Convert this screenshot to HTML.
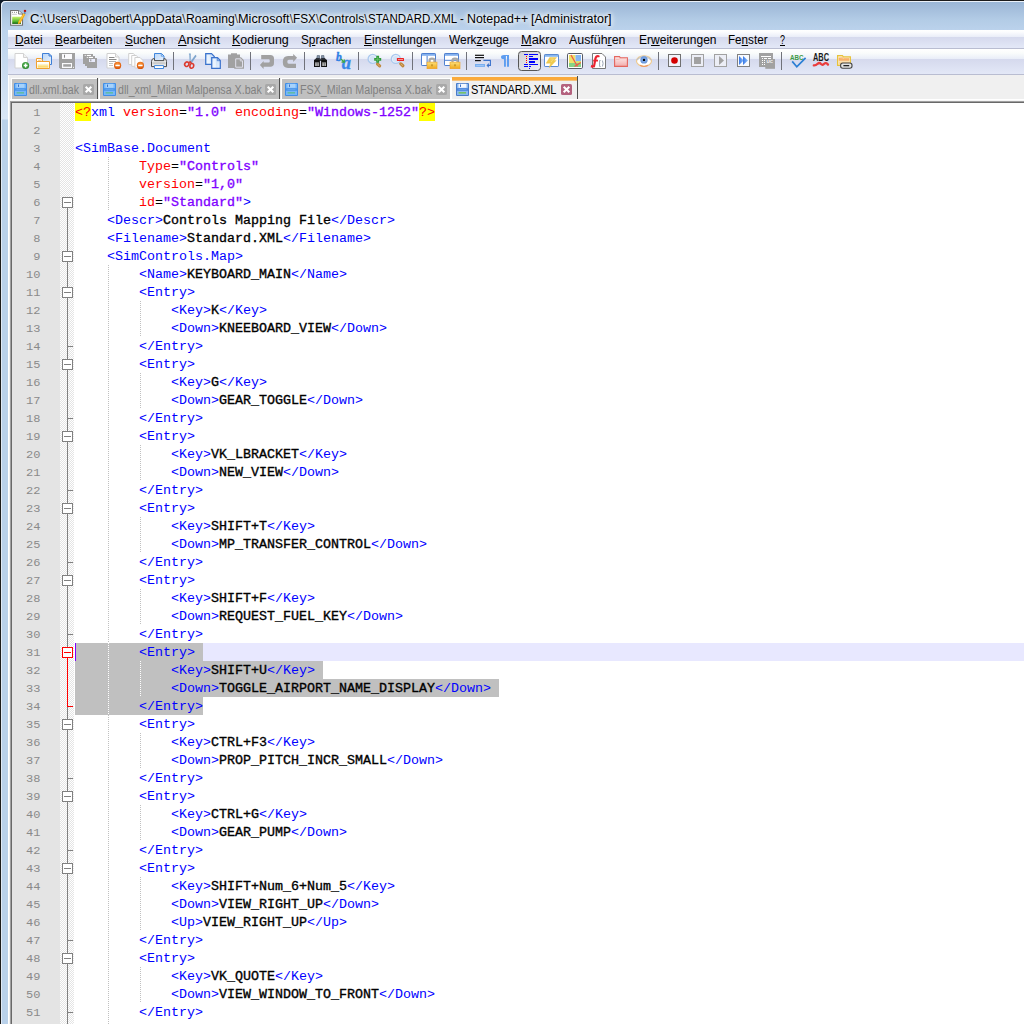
<!DOCTYPE html>
<html><head><meta charset="utf-8"><title>Notepad++</title>
<style>
html,body{margin:0;padding:0;}
body{width:1024px;height:1024px;overflow:hidden;position:relative;background:#f0f0f0;font-family:'Liberation Sans', sans-serif;}
.a{position:absolute;}
.t{position:absolute;white-space:pre;line-height:1;}
#title{left:0;top:0;width:1024px;height:30px;background:linear-gradient(#98b5d5 0px,#a3bddb 8px,#b3cce6 20px,#bbd2ec 30px);}
#menubar{left:8px;top:30px;width:1016px;height:18px;background:linear-gradient(#ffffff 0px,#fbfcfe 2px,#e9edf8 7px,#d5d9ed 7px,#e3e8f7 18px);border-bottom:1px solid #b9bdd1;}
#toolbar{left:8px;top:49px;width:1016px;height:25px;background:linear-gradient(#ffffff 0px,#fafcfb 4px,#e9edf8 10px,#d5d9ed 10px,#e3e8f7 25px);border-bottom:1px solid #b9bdd1;}
.mi{font-size:12px;color:#000;top:33.5px;transform-origin:0 0;}
.mi u{text-decoration:underline;text-decoration-thickness:1px;text-underline-offset:1px;}
.sep{position:absolute;top:52px;width:1px;height:18px;background:#70727a;}
.ic{position:absolute;top:53px;width:16px;height:16px;overflow:visible;}
.tab{position:absolute;top:79px;height:20px;background:#c0c0c0;}
.tabt{font-size:12px;top:83.6px;color:#808080;transform-origin:0 0;}
.ln{position:absolute;left:12px;width:28.4px;text-align:right;font:12px/18px 'Liberation Mono', monospace;color:#8a8a8a;height:18px;margin-top:1px;transform-origin:0 12px;transform:scaleY(0.9);}
.cl{position:absolute;left:75px;height:18px;white-space:pre;tab-size:4;-moz-tab-size:4;font:13.333px/18px 'Liberation Mono', monospace;color:#000;-webkit-text-stroke:0.35px #000;margin-top:1px;transform-origin:0 12px;transform:scaleY(0.9);}
.cl b{font-weight:bold;}
.g{color:#0000ff;-webkit-text-stroke:0;}
.r{color:#ff0000;-webkit-text-stroke:0;}
.p{color:#8000ff;-webkit-text-stroke:0.35px #8000ff;}
.e{color:#000;-webkit-text-stroke:0;}
.q{color:#ff0000;-webkit-text-stroke:0;}
.ig{position:absolute;width:1px;background:repeating-linear-gradient(#c0c0c0 0 1px,transparent 1px 2px);}
.fb{position:absolute;left:62px;width:9px;height:9px;border:1px solid #808080;background:#fff;}
.fb i{position:absolute;left:1px;top:4px;width:7px;height:1px;background:#808080;}
.ft{position:absolute;left:68px;width:5px;height:1px;background:#808080;}
</style></head><body>

<div id="title" class="a"></div>
<div class="a" style="left:0;top:30px;width:8px;height:994px;background:linear-gradient(#bcd3ec 0px,#d9e6f5 89px,#b9d1ea 90px,#b9d1ea 994px);"></div>
<div class="a" style="left:0;top:0;width:1024px;height:1px;background:#1c1c1c;"></div>
<div class="a" style="left:0;top:0;width:1px;height:1024px;background:#1c1c1c;"></div>
<div class="a" style="left:1px;top:1px;width:1023px;height:1px;background:#eaf1f9;"></div>
<div class="a" style="left:1px;top:1px;width:1px;height:1023px;background:#dfe9f5;"></div>
<svg class="a" style="left:0;top:0;width:7px;height:7px" viewBox="0 0 7 7"><path d="M0 0H7V1H5.5Q1 1 1 5.5V7H0Z" fill="#0e1a28"/><path d="M1.5 7V5.5Q1.5 1.5 5.5 1.5H7" fill="none" stroke="#f2f7fc" stroke-width="1"/></svg>
<svg class="a" style="left:10px;top:9px;width:17px;height:17px" viewBox="0 0 17 17"><defs><linearGradient id="gNp" x1="0" y1="0" x2="0" y2="1"><stop offset="0" stop-color="#c8f26a"/><stop offset="0.7" stop-color="#4fb02c"/><stop offset="1" stop-color="#0d5a0d"/></linearGradient></defs><path d="M0.6 1.5H8.5L12.5 5V16.3H0.6Z" fill="#fff" stroke="#707070" stroke-width="1.1"/><path d="M8.5 1.5V5H12.5" fill="#f4f4f4" stroke="#707070" stroke-width="0.9"/><path d="M2 3.3H3M4 3.3H5M6 3.3H7" stroke="#888" stroke-width="1"/><path d="M2 5.3H7" stroke="#bbb" stroke-width="0.8"/><rect x="2.2" y="7.7" width="8.8" height="7.2" fill="url(#gNp)"/><path d="M13.2 4.2L8.2 12.9L8 15.3L10.3 14.2L15.4 5.5Z" fill="#f6ae12"/><path d="M13.9 5L9.2 13.3" stroke="#fbd060" stroke-width="0.7"/><path d="M14.2 3.6L15.4 4.4" stroke="#4a6a9a" stroke-width="1.3"/><rect x="13.9" y="0.9" width="2.2" height="2" fill="#b01010"/></svg>
<div class="t" style="left:30.3px;top:12.5px;font-size:12px;color:#000;transform-origin:0 0;transform:scaleX(1.0884);text-shadow:0 0 5px #fff,0 0 5px #fff,0 0 8px #fff;">C:\</div>
<div class="t" style="left:47px;top:12.5px;font-size:12px;color:#000;transform-origin:0 0;transform:scaleX(0.9460);text-shadow:0 0 5px #fff,0 0 5px #fff,0 0 8px #fff;">Users\</div>
<div class="t" style="left:79.8px;top:12.5px;font-size:12px;color:#000;transform-origin:0 0;transform:scaleX(1.0018);text-shadow:0 0 5px #fff,0 0 5px #fff,0 0 8px #fff;">Dagobert\</div>
<div class="t" style="left:132.6px;top:12.5px;font-size:12px;color:#000;transform-origin:0 0;transform:scaleX(1.0570);text-shadow:0 0 5px #fff,0 0 5px #fff,0 0 8px #fff;">AppData\</div>
<div class="t" style="left:185.5px;top:12.5px;font-size:12px;color:#000;transform-origin:0 0;transform:scaleX(1.0144);text-shadow:0 0 5px #fff,0 0 5px #fff,0 0 8px #fff;">Roaming\</div>
<div class="t" style="left:237.6px;top:12.5px;font-size:12px;color:#000;transform-origin:0 0;transform:scaleX(1.0612);text-shadow:0 0 5px #fff,0 0 5px #fff,0 0 8px #fff;">Microsoft\</div>
<div class="t" style="left:292.8px;top:12.5px;font-size:12px;color:#000;transform-origin:0 0;transform:scaleX(0.9823);text-shadow:0 0 5px #fff,0 0 5px #fff,0 0 8px #fff;">FSX\</div>
<div class="t" style="left:319px;top:12.5px;font-size:12px;color:#000;transform-origin:0 0;transform:scaleX(1.0118);text-shadow:0 0 5px #fff,0 0 5px #fff,0 0 8px #fff;">Controls\</div>
<div class="t" style="left:367.6px;top:12.5px;font-size:12px;color:#000;transform-origin:0 0;transform:scaleX(0.9570);text-shadow:0 0 5px #fff,0 0 5px #fff,0 0 8px #fff;">STANDARD.XML - </div>
<div class="t" style="left:466.5px;top:12.5px;font-size:12px;color:#000;transform-origin:0 0;transform:scaleX(1.0316);text-shadow:0 0 5px #fff,0 0 5px #fff,0 0 8px #fff;">Notepad++ </div>
<div class="t" style="left:531.2px;top:12.5px;font-size:12px;color:#000;transform-origin:0 0;transform:scaleX(1.0419);text-shadow:0 0 5px #fff,0 0 5px #fff,0 0 8px #fff;">[Administrator]</div>
<div id="menubar" class="a"></div>
<div class="t mi" style="left:14.70px;transform:scaleX(0.9905);"><u>D</u>atei</div>
<div class="t mi" style="left:55.20px;transform:scaleX(0.9863);"><u>B</u>earbeiten</div>
<div class="t mi" style="left:125.20px;transform:scaleX(0.9889);"><u>S</u>uchen</div>
<div class="t mi" style="left:178.45px;transform:scaleX(1.0671);"><u>A</u>nsicht</div>
<div class="t mi" style="left:232.20px;transform:scaleX(1.0371);"><u>K</u>odierung</div>
<div class="t mi" style="left:301.20px;transform:scaleX(0.9781);">S<u>p</u>rachen</div>
<div class="t mi" style="left:364.45px;transform:scaleX(0.9991);"><u>E</u>instellungen</div>
<div class="t mi" style="left:449.20px;transform:scaleX(0.9920);">Werk<u>z</u>euge</div>
<div class="t mi" style="left:521.20px;transform:scaleX(1.0647);"><u>M</u>akro</div>
<div class="t mi" style="left:569.20px;transform:scaleX(1.0328);">Ausfüh<u>r</u>en</div>
<div class="t mi" style="left:638.70px;transform:scaleX(1.0014);">Er<u>w</u>eiterungen</div>
<div class="t mi" style="left:728.45px;transform:scaleX(0.9708);">Fe<u>n</u>ster</div>
<div class="t mi" style="left:779.95px;transform:scaleX(0.7477);"><u>?</u></div>
<div id="toolbar" class="a"></div>
<svg class="a" style="width:0;height:0;left:0;top:0" viewBox="0 0 1 1"><defs>
<linearGradient id="gFold" x1="0" y1="0" x2="0" y2="1"><stop offset="0" stop-color="#fffbe8"/><stop offset="1" stop-color="#fbd24a"/></linearGradient>
<linearGradient id="gPage" x1="0" y1="0" x2="1" y2="1"><stop offset="0" stop-color="#b9d6f7"/><stop offset="1" stop-color="#e9f2fd"/></linearGradient>
<radialGradient id="gOr" cx="0.5" cy="0.35" r="0.7"><stop offset="0" stop-color="#ff9a3c"/><stop offset="1" stop-color="#d24a00"/></radialGradient>
<radialGradient id="gGn" cx="0.5" cy="0.4" r="0.7"><stop offset="0" stop-color="#5fc05f"/><stop offset="1" stop-color="#1f7a1f"/></radialGradient>
<linearGradient id="gPr" x1="0" y1="0" x2="0" y2="1"><stop offset="0" stop-color="#ffffff"/><stop offset="0.6" stop-color="#d8d8d8"/><stop offset="1" stop-color="#f4f4f4"/></linearGradient>
<linearGradient id="gLock" x1="0" y1="0" x2="0" y2="1"><stop offset="0" stop-color="#fbe07a"/><stop offset="1" stop-color="#f0a81c"/></linearGradient>
<linearGradient id="gRedF" x1="0" y1="0" x2="0" y2="1"><stop offset="0" stop-color="#fdeeee"/><stop offset="1" stop-color="#f2acac"/></linearGradient>
<linearGradient id="gBtn" x1="0" y1="0" x2="1" y2="1"><stop offset="0" stop-color="#d4d4d6"/><stop offset="1" stop-color="#eef0f8"/></linearGradient>
<linearGradient id="gTri" x1="0" y1="0" x2="1" y2="0"><stop offset="0" stop-color="#3a78e6"/><stop offset="1" stop-color="#8cc0fa"/></linearGradient>
</defs></svg>
<svg class="ic" style="left:14px;top:53px;width:16px;height:16px" viewBox="0 0 16 16"><path d="M1 0.5H9.5L13.5 4.5V15H1Z" fill="#fff" stroke="#d2d2d2"/><path d="M9.5 0.5V4.5H13.5" fill="#f1f1f1" stroke="#d2d2d2"/><circle cx="11.6" cy="12.5" r="3.6" fill="url(#gGn)"/><path d="M11.6 10.6V14.4M9.7 12.5H13.5" stroke="#fff" stroke-width="1.4"/></svg>
<svg class="ic" style="left:36px;top:53px;width:16px;height:16px" viewBox="0 0 16 16"><path d="M6.5 0.5H13L15.5 3V11.5H6.5Z" fill="url(#gPage)" stroke="#3f7fd6"/><path d="M13 0.5V3H15.5" fill="none" stroke="#3f7fd6"/><path d="M0.5 9V5.5H5.3L6.5 7V9Z" fill="#fff" stroke="#f0a030"/><path d="M0.5 8.5H13.5V15.5H0.5Z" fill="#fff" stroke="#f0a030"/><rect x="1.6" y="10.6" width="10.8" height="4" fill="url(#gFold)"/><path d="M2 7.3H4.6L5.6 8" stroke="#f6c070" fill="none" stroke-width="0.9"/></svg>
<svg class="ic" style="left:59px;top:53px;width:16px;height:16px" viewBox="0 0 16 16"><path d="M0 0H16V16H1.5L0 14.5Z" fill="#a1a1a1"/><rect x="3" y="1" width="10" height="5" fill="#fbfbfd"/><rect x="5" y="1.7" width="1" height="3" fill="#8a8a8a"/><rect x="3" y="10" width="10" height="5" fill="#fbfbfd"/><rect x="4.2" y="11.2" width="7.8" height="2.5" fill="#a1a1a1"/><rect x="14" y="13.8" width="1" height="1" fill="#fff"/></svg>
<svg class="ic" style="left:83px;top:53px;width:16px;height:16px" viewBox="0 0 16 16"><rect x="0" y="1" width="10" height="10" fill="#a1a1a1"/><rect x="2" y="3" width="10" height="10" fill="#a1a1a1"/><rect x="4" y="5" width="10" height="10" fill="#a1a1a1"/><rect x="3.8" y="1.9" width="4.2" height="1.1" fill="#fff"/><rect x="1.7" y="1.9" width="1" height="1.1" fill="#fff"/><rect x="5.8" y="3.9" width="4.2" height="1.1" fill="#fff"/><rect x="3.8" y="3.9" width="1" height="1.1" fill="#fff"/><rect x="6" y="6" width="6" height="3" fill="#e9ebfb"/><rect x="7.3" y="6.3" width="1" height="2" fill="#8a8a8a"/></svg>
<svg class="ic" style="left:106px;top:53px;width:16px;height:16px" viewBox="0 0 16 16"><path d="M1 0.5H9.5L13 4V15H1Z" fill="#fff" stroke="#cfcfcf"/><path d="M9.5 0.5V4H13" fill="#f1f1f1" stroke="#cfcfcf"/><path d="M3 4.5H8.5M3 6.5H10.5" stroke="#8a8a8a"/><path d="M3 8.5H10" stroke="#b0b0b0"/><path d="M3 10.5H7M3 12.5H7" stroke="#c4c4c4"/><circle cx="11.6" cy="12.4" r="3.6" fill="url(#gOr)"/><rect x="9.4" y="11.7" width="4.4" height="1.5" fill="#fff"/></svg>
<svg class="ic" style="left:128px;top:53px;width:16px;height:16px" viewBox="0 0 16 16"><path d="M0.7 0.5H5.2L7 2.3V11.5H0.7Z" fill="#fff" stroke="#cfcfcf"/><path d="M3.7 2.5H8.2L10 4.3V13.3H3.7Z" fill="#fff" stroke="#cfcfcf"/><path d="M6.9 4.5H12L15 7.5V15H6.9Z" fill="#fff" stroke="#cfcfcf"/><circle cx="12.4" cy="12.4" r="3.6" fill="url(#gOr)"/><rect x="10.2" y="11.7" width="4.4" height="1.5" fill="#fff"/></svg>
<svg class="ic" style="left:151px;top:53px;width:16px;height:16px" viewBox="0 0 16 16"><path d="M3.5 8V0.5H10.5L13 3V8" fill="url(#gPage)" stroke="#3f86dc"/><path d="M10.3 0.8V3.2H12.7" fill="none" stroke="#3f86dc" stroke-width="0.7"/><path d="M3.2 5.5H3.5V7.6H12.9V5.5H13Q15.5 5.5 15.5 8.5V13.6H0.5V8.5Q0.5 5.5 3.2 5.5Z" fill="url(#gPr)" stroke="#4c4c4c"/><rect x="2.2" y="9.3" width="11.6" height="1.6" fill="#c9c9c9"/><path d="M3.5 12.6H12.5V15.5H3.5Z" fill="#fff" stroke="#3f86dc"/></svg>
<svg class="ic" style="left:182px;top:53px;width:16px;height:16px" viewBox="0 0 16 16"><path d="M6.9 0.4L8.8 0.4L9.2 10L7.6 10Z" fill="#7da4cc"/><path d="M13.4 1.8L14.6 3L9.6 10.2L8 9.2Z" fill="#7da4cc"/><path d="M7.8 1.5L8.1 8" stroke="#dce8f4" stroke-width="0.6"/><ellipse cx="4.8" cy="11.2" rx="2" ry="2.3" transform="rotate(35 4.8 11.2)" fill="none" stroke="#dc3a2e" stroke-width="1.6"/><ellipse cx="9.8" cy="12.9" rx="1.9" ry="2.4" transform="rotate(10 9.8 12.9)" fill="none" stroke="#dc3a2e" stroke-width="1.6"/><path d="M6.3 9.6L8.3 8.8L9.4 10.4" fill="none" stroke="#dc3a2e" stroke-width="1.3"/></svg>
<svg class="ic" style="left:205px;top:53px;width:16px;height:16px" viewBox="0 0 16 16"><path d="M0.7 0.7H6.5L9.3 3.5V11.3H0.7Z" fill="url(#gPage)" stroke="#3a72cc" stroke-width="1.2"/><path d="M6.7 4.7H12.5L15.3 7.5V15.3H6.7Z" fill="url(#gPage)" stroke="#3a72cc" stroke-width="1.2"/><path d="M12.3 5V7.7H15" fill="none" stroke="#3a72cc" stroke-width="0.8"/><rect x="1.8" y="1.8" width="3" height="8.5" fill="#fff" opacity="0.6"/><rect x="7.8" y="5.8" width="3" height="8.5" fill="#fff" opacity="0.6"/></svg>
<svg class="ic" style="left:228px;top:53px;width:16px;height:16px" viewBox="0 0 16 16"><path d="M0 1.5H3V0.3H9V1.5H12V15H0Z" fill="#a1a1a1"/><path d="M6.2 4.3H13L16 7.3V15.7H6.2Z" fill="#a1a1a1"/><path d="M7.7 5.8H12.4L14.5 7.9V14.2H7.7Z" fill="#a1a1a1" stroke="#dfdfea" stroke-width="1"/><path d="M12.3 5.9V8H14.4" fill="none" stroke="#dfdfea" stroke-width="0.8"/></svg>
<svg class="ic" style="left:259px;top:53px;width:16px;height:16px" viewBox="0 0 16 16"><path d="M2.2 2H11.3Q15 2 15 5.6V10Q15 13.8 11.3 13.8H4.6V15.9L0.9 12L4.6 8V9.6H9.8Q10.7 9.6 10.7 8.8V7Q10.7 6.2 9.8 6.2H2.2Z" fill="#a1a1a1"/></svg>
<svg class="ic" style="left:282px;top:53px;width:16px;height:16px" viewBox="0 0 16 16"><path d="M14 10.8V14.9H6Q0.8 14.9 0.8 9Q0.8 2.9 6 2.9H11.2V1L15.1 4.8L11.2 8.9V6.8H6.8Q5.3 6.8 5.3 8.8Q5.3 10.8 6.8 10.8Z" fill="#a1a1a1"/></svg>
<svg class="ic" style="left:313px;top:53px;width:16px;height:16px" viewBox="0 0 16 16"><path d="M3.9 2.2H6.8V7H3.2Z" fill="#59677a"/><path d="M8.2 2.2H11.1L11.8 7H8.2Z" fill="#59677a"/><path d="M4.6 3H5.6V6.5H4.6ZM9.4 3H10.4V6.5H9.4Z" fill="#9fb0c4"/><path d="M1 7.4L3.2 5H6.8V7.4ZM8.2 5H11.8L14 7.4H8.2Z" fill="#2c3038"/><rect x="6.4" y="5.6" width="2.2" height="2.4" fill="#3a4048"/><rect x="1" y="6.8" width="5.9" height="7.2" fill="#111"/><rect x="8.1" y="6.8" width="5.9" height="7.2" fill="#111"/><rect x="2.2" y="9.3" width="3.6" height="3.7" fill="#c4c4c4"/><rect x="9.3" y="9.3" width="3.6" height="3.7" fill="#c4c4c4"/><rect x="3.7" y="9.3" width="0.8" height="3.7" fill="#555"/><rect x="10.8" y="9.3" width="0.8" height="3.7" fill="#555"/><rect x="2.2" y="9.3" width="3.6" height="0.9" fill="#666"/><rect x="9.3" y="9.3" width="3.6" height="0.9" fill="#666"/></svg>
<svg class="ic" style="left:336px;top:53px;width:16px;height:16px" viewBox="0 0 16 16"><text x="0" y="7.6" font-family="Liberation Serif, serif" font-weight="bold" font-style="italic" font-size="11.5" fill="#3080e4" stroke="#3080e4" stroke-width="0.4">b</text><text x="5.8" y="15.5" font-family="Liberation Serif, serif" font-weight="bold" font-style="italic" font-size="18.5" fill="#3888e8" stroke="#3888e8" stroke-width="0.3">a</text><path d="M5 6L7.5 8.5M5.5 9.2H8.3V6.5" fill="none" stroke="#3aa648" stroke-width="1.2"/></svg>
<svg class="ic" style="left:367px;top:53px;width:16px;height:16px" viewBox="0 0 16 16"><circle cx="5.6" cy="5.9" r="4.5" fill="#e6effa" stroke="#a9c8ee" stroke-width="1.3"/><circle cx="5.6" cy="5.9" r="3" fill="#d3e3f7"/><path d="M9.2 10L10.4 11" stroke="#b7b0a0" stroke-width="1.6"/><path d="M10.6 11.1L12.6 12.9" stroke="#bf873c" stroke-width="3.2" stroke-linecap="round"/><path d="M10.8 11.3L12.4 12.7" stroke="#dcb070" stroke-width="1" stroke-linecap="round"/><path d="M10.7 2.8V9.8M7.2 6.3H14.2" stroke="#2f9a3a" stroke-width="2.8"/><path d="M10.7 4V8.6M8.4 6.3H13" stroke="#6cc46c" stroke-width="0.8"/></svg>
<svg class="ic" style="left:390px;top:53px;width:16px;height:16px" viewBox="0 0 16 16"><circle cx="5.8" cy="5.9" r="4.5" fill="#e6effa" stroke="#a9c8ee" stroke-width="1.3"/><circle cx="5.8" cy="5.9" r="3" fill="#d3e3f7"/><path d="M9.4 9.8L10.6 10.8" stroke="#b7b0a0" stroke-width="1.6"/><path d="M10.9 10.9L12.9 12.7" stroke="#bf873c" stroke-width="3.2" stroke-linecap="round"/><path d="M11.1 11.1L12.7 12.5" stroke="#dcb070" stroke-width="1" stroke-linecap="round"/><rect x="6.9" y="4.9" width="7.1" height="3" rx="0.5" fill="#ec2424"/><rect x="8" y="6" width="5" height="0.9" fill="#f9a0a0"/></svg>
<svg class="ic" style="left:421px;top:53px;width:16px;height:16px" viewBox="0 0 16 16"><rect x="0.5" y="0.5" width="14" height="12" rx="0.6" fill="#fff" stroke="#4f80d0" stroke-width="1"/><rect x="1" y="1" width="13" height="1.8" fill="#82b0ee"/><rect x="5.6" y="2.8" width="1" height="9.4" fill="#4f80d0"/><path d="M8.5 9.5V7.5Q8.5 5.6 11 5.6Q13.5 5.6 13.5 7.5V9.5" fill="none" stroke="#a8a8a8" stroke-width="2.3"/><rect x="6" y="9.1" width="10" height="6.6" fill="url(#gLock)" stroke="#f0a020" stroke-width="0.6"/><rect x="10.3" y="11.3" width="1.4" height="2" fill="#b98a1e"/></svg>
<svg class="ic" style="left:444px;top:53px;width:16px;height:16px" viewBox="0 0 16 16"><rect x="0.5" y="0.5" width="14" height="12" rx="0.6" fill="#fff" stroke="#4f80d0" stroke-width="1"/><rect x="1" y="1" width="13" height="1.8" fill="#82b0ee"/><rect x="1" y="6.8" width="13" height="1" fill="#4f80d0"/><path d="M8.5 9.5V7.5Q8.5 5.6 11 5.6Q13.5 5.6 13.5 7.5V9.5" fill="none" stroke="#a8a8a8" stroke-width="2.3"/><rect x="6" y="9.1" width="10" height="6.6" fill="url(#gLock)" stroke="#f0a020" stroke-width="0.6"/><rect x="10.3" y="11.3" width="1.4" height="2" fill="#b98a1e"/></svg>
<svg class="ic" style="left:475px;top:53px;width:16px;height:16px" viewBox="0 0 16 16"><rect x="0" y="1.7" width="9" height="1.2" fill="#111"/><rect x="0" y="4" width="9" height="1.2" fill="#111"/><rect x="0" y="7" width="5.8" height="1.2" fill="#111"/><rect x="0" y="11" width="10" height="2.9" fill="#78aef0"/><rect x="1.2" y="12" width="7.6" height="0.8" fill="#a8ccf8"/><path d="M8.4 7.4H15.4V12.4H12.5" fill="none" stroke="#3a72cc" stroke-width="1.1"/><path d="M11.5 12.4L13.8 10V14.8Z" fill="#3a72cc"/></svg>
<svg class="ic" style="left:498px;top:53px;width:16px;height:16px" viewBox="0 0 16 16"><path d="M11 2V13.8H9V3.1H7.9V13.8H6V6.3Q3 6.3 3 4.1Q3 2 6 2Z" fill="#5d9df0"/></svg>
<div class="a" style="left:518px;top:51px;width:21px;height:18px;border:1px solid #565656;border-radius:3.5px;background:linear-gradient(135deg,#d2d2d4,#eceef6);"></div>
<svg class="ic" style="left:524px;top:53px;width:16px;height:16px" viewBox="0 0 16 16"><rect x="0" y="1" width="4" height="1" fill="#0000ff"/><rect x="5" y="1" width="9" height="1" fill="#0000ff"/><rect x="5" y="3" width="4" height="1" fill="#0000ff"/><rect x="5" y="5" width="9" height="2" fill="#0000ff"/><rect x="5" y="8" width="6" height="2" fill="#0000ff"/><rect x="0" y="11" width="4" height="1" fill="#0000ff"/><rect x="5" y="11" width="9" height="1" fill="#0000ff"/><rect x="0" y="13" width="4" height="1" fill="#0000ff"/><rect x="5" y="13" width="2" height="1" fill="#0000ff"/><rect x="5" y="15" width="1" height="1" fill="#0000ff"/><rect x="2" y="3" width="1" height="1" fill="#f00"/><rect x="2" y="5" width="1" height="1" fill="#f00"/><rect x="2" y="7" width="1" height="1" fill="#f00"/><rect x="2" y="9" width="1" height="1" fill="#f00"/></svg>
<svg class="ic" style="left:544px;top:53px;width:16px;height:16px" viewBox="0 0 16 16"><rect x="0.5" y="1.5" width="14" height="12" rx="0.6" fill="#fff" stroke="#5a8ad2" stroke-width="1"/><rect x="1" y="2" width="13" height="1.8" fill="#86b6ee"/><path d="M5.6 4.6H12.6L10 7.6H12.2L5.2 14.8L6.6 10.2H2.2Z" fill="#f0cb4e" stroke="#ecc040" stroke-width="0.4"/><path d="M6.5 6H9.5L7 9" stroke="#f8e088" stroke-width="0.8" fill="none"/></svg>
<svg class="ic" style="left:567px;top:53px;width:16px;height:16px" viewBox="0 0 16 16"><rect x="0.5" y="0.5" width="15" height="15" rx="1.2" fill="#fff" stroke="#565a64" stroke-width="1"/><rect x="2" y="2" width="6.5" height="8" fill="#eee26a"/><rect x="8.5" y="2" width="5.5" height="6" fill="#86b6f2"/><rect x="2" y="10" width="12" height="4" fill="#86d486"/><path d="M8.5 8H14V10H8.5Z" fill="#d8e070"/><path d="M4 2L10.5 13.5M13.8 9.5L7.5 13.5" stroke="#f05a4a" stroke-width="1.3" fill="none"/></svg>
<svg class="ic" style="left:590px;top:53px;width:16px;height:16px" viewBox="0 0 16 16"><path d="M2.5 0.5H12L15.5 4V15.5H2.5Z" fill="#fff" stroke="#787878"/><path d="M8.6 3.2Q5.8 2.5 5.4 6L4 13.4" fill="none" stroke="#ec2430" stroke-width="2.2" stroke-linecap="round"/><path d="M1 13L3.5 13.8" stroke="#ec2430" stroke-width="2.4"/><path d="M3.2 7.6H8" stroke="#ec2430" stroke-width="1.8"/><path d="M10.6 7.5H9.6V13.5H10.6M12.4 7.5Q13.8 10.5 12.4 13.5" fill="none" stroke="#9aa4b4" stroke-width="1"/></svg>
<svg class="ic" style="left:614px;top:53px;width:16px;height:16px" viewBox="0 0 16 16"><path d="M0.6 3.6H5.5L6.3 4.8H13.4V13.4H0.6Z" fill="url(#gRedF)" stroke="#e4665e" stroke-width="1.1"/><path d="M1.8 6.3H5L6 5.6H12.2" stroke="#f4b4b0" fill="none"/></svg>
<svg class="ic" style="left:636px;top:53px;width:16px;height:16px" viewBox="0 0 16 16"><ellipse cx="8" cy="8" rx="7.5" ry="5.3" fill="#fff" stroke="#f0c888" stroke-width="1.1"/><path d="M0.8 7Q8 -0.3 15.2 7" fill="none" stroke="#c4c4c4" stroke-width="1.2"/><circle cx="8" cy="6.9" r="3.7" fill="#6a96d8"/><circle cx="8" cy="6.9" r="2.6" fill="#7aa6e6"/><circle cx="8" cy="6.9" r="1.2" fill="#000"/><path d="M4 12.3Q8 14.8 12 12.3" fill="none" stroke="#ee9a62" stroke-width="1.1"/></svg>
<svg class="ic" style="left:668px;top:54px;width:13px;height:13px" viewBox="0 0 13 13"><rect x="0.5" y="0.5" width="12" height="12" fill="#f1f3fa" stroke="#707070"/><circle cx="6.5" cy="6.5" r="3.3" fill="#d40000"/></svg>
<svg class="ic" style="left:691px;top:54px;width:13px;height:13px" viewBox="0 0 13 13"><rect x="0.5" y="0.5" width="12" height="12" fill="#eceef6" stroke="#a1a1a1"/><rect x="3" y="3" width="7" height="7" fill="#a1a1a1"/></svg>
<svg class="ic" style="left:714px;top:54px;width:13px;height:13px" viewBox="0 0 13 13"><rect x="0.5" y="0.5" width="12" height="12" fill="#eceef6" stroke="#a1a1a1"/><path d="M5 2L10 6.5L5 11Z" fill="#a1a1a1"/></svg>
<svg class="ic" style="left:737px;top:54px;width:13px;height:13px" viewBox="0 0 13 13"><rect x="0.5" y="0.5" width="12" height="12" fill="#f8fafd" stroke="#808080"/><path d="M2 2L6.8 6.5L2 11Z" fill="url(#gTri)"/><path d="M6 2L11 6.5L6 11Z" fill="url(#gTri)"/></svg>
<svg class="ic" style="left:759px;top:53px;width:16px;height:16px" viewBox="0 0 16 16"><rect x="0" y="0" width="14" height="14" fill="#a1a1a1"/><rect x="6.3" y="6" width="9.7" height="9.8" fill="#a1a1a1"/><rect x="2" y="3" width="10" height="1" fill="#fff"/><rect x="3" y="5" width="1" height="1" fill="#fff"/><rect x="5" y="5" width="3" height="1" fill="#fff"/><rect x="9" y="5" width="3" height="1" fill="#fff"/><rect x="3" y="7" width="1" height="1" fill="#fff"/><rect x="5" y="7" width="1" height="1" fill="#fff"/><rect x="3" y="9" width="1" height="1" fill="#fff"/><rect x="5" y="9" width="1" height="1" fill="#fff"/><rect x="3" y="11" width="1" height="1" fill="#fff"/><rect x="5" y="11" width="1" height="1" fill="#fff"/><text x="7.6" y="10.4" font-family="Liberation Sans, sans-serif" font-weight="bold" font-size="4.4" fill="#fff">UC</text></svg>
<svg class="ic" style="left:790px;top:53px;width:16px;height:16px" viewBox="0 0 16 16"><text x="0" y="6.8" font-family="Liberation Sans, sans-serif" font-weight="bold" font-size="6.6" fill="#3c9a44" textLength="13.4" lengthAdjust="spacingAndGlyphs">ABC</text><path d="M2.2 8.4L6.8 13.8L15.6 4.8" fill="none" stroke="#2b7fd4" stroke-width="1.7"/></svg>
<svg class="ic" style="left:813px;top:53px;width:16px;height:16px" viewBox="0 0 16 16"><text x="0" y="7.6" font-family="Liberation Sans, sans-serif" font-weight="bold" font-size="10.4" fill="#1a1a1a" textLength="16" lengthAdjust="spacingAndGlyphs">ABC</text><path d="M0.8 12.4Q2.8 12.6 4.6 10.8Q6.4 9.2 8 11Q9.6 12.6 11.2 10.8Q12.8 9.2 15 11.6" fill="none" stroke="#ea3c3c" stroke-width="2.3" stroke-linecap="round"/></svg>
<svg class="ic" style="left:837px;top:53px;width:16px;height:16px" viewBox="0 0 16 16"><path d="M0.6 2.6H5.4L6.4 3.8H13.4V12.4H0.6Z" fill="#fdebc8" stroke="#e6c23c" stroke-width="1.2"/><path d="M2 5H5.5L6.4 4.4M2 5V7.5H12V5.5H7" fill="#f8b06a" stroke="#f8b06a" stroke-width="0.6"/><rect x="2" y="8.5" width="10" height="3" fill="#fbd69a"/><rect x="3.6" y="10" width="11.4" height="5.2" rx="2.2" fill="#e4e4e4" stroke="#444" stroke-width="1.1"/><rect x="6.4" y="12" width="5.8" height="1.3" fill="#222"/></svg>
<div class="sep" style="left:173px"></div>
<div class="sep" style="left:250px"></div>
<div class="sep" style="left:304px"></div>
<div class="sep" style="left:358px"></div>
<div class="sep" style="left:412px"></div>
<div class="sep" style="left:466px"></div>
<div class="sep" style="left:658px"></div>
<div class="sep" style="left:781px"></div>
<div class="tab" style="left:12px;width:86px;"></div>
<div class="t tabt" style="left:28.75px;color:#808080;transform:scaleX(0.8820);">dll.xml.bak</div>
<svg class="a" style="left:14px;top:83px;width:13px;height:13px" viewBox="0 0 13 13"><rect x="0" y="0" width="13" height="13" rx="1" fill="#3f8ee8"/><rect x="1" y="1" width="11" height="11" fill="#76b6f8"/><rect x="2.5" y="0.8" width="8" height="4" fill="#a6d2fb"/><rect x="4" y="1.5" width="1" height="2.4" fill="#3a70c8"/><rect x="1" y="5.2" width="11" height="2.6" fill="#4a94ea"/><rect x="2.5" y="6" width="8" height="0.9" fill="#62a6f0"/><rect x="2.6" y="9" width="7.4" height="1.6" fill="#62bca6"/></svg>
<div class="a" style="left:11px;top:78px;width:87px;height:1px;background:#fff;"></div><div class="a" style="left:11px;top:78px;width:1px;height:21px;background:#fff;"></div>
<svg class="a" style="left:83px;top:84px;width:11px;height:11px" viewBox="0 0 11 11"><rect width="11" height="11" rx="1.5" fill="#a8a8a8"/><path d="M2.7 2.7L8.3 8.3M8.3 2.7L2.7 8.3" stroke="#fff" stroke-width="2.1"/></svg>
<div class="tab" style="left:100px;width:180px;"></div>
<div class="t tabt" style="left:117.50px;color:#808080;transform:scaleX(0.8872);">dll_xml_Milan Malpensa X.bak</div>
<svg class="a" style="left:103px;top:83px;width:13px;height:13px" viewBox="0 0 13 13"><rect x="0" y="0" width="13" height="13" rx="1" fill="#3f8ee8"/><rect x="1" y="1" width="11" height="11" fill="#76b6f8"/><rect x="2.5" y="0.8" width="8" height="4" fill="#a6d2fb"/><rect x="4" y="1.5" width="1" height="2.4" fill="#3a70c8"/><rect x="1" y="5.2" width="11" height="2.6" fill="#4a94ea"/><rect x="2.5" y="6" width="8" height="0.9" fill="#62a6f0"/><rect x="2.6" y="9" width="7.4" height="1.6" fill="#62bca6"/></svg>
<div class="a" style="left:99px;top:78px;width:181px;height:1px;background:#fff;"></div><div class="a" style="left:99px;top:78px;width:1px;height:21px;background:#fff;"></div>
<svg class="a" style="left:265px;top:84px;width:11px;height:11px" viewBox="0 0 11 11"><rect width="11" height="11" rx="1.5" fill="#a8a8a8"/><path d="M2.7 2.7L8.3 8.3M8.3 2.7L2.7 8.3" stroke="#fff" stroke-width="2.1"/></svg>
<div class="tab" style="left:282px;width:168px;"></div>
<div class="t tabt" style="left:300.00px;color:#808080;transform:scaleX(0.8914);">FSX_Milan Malpensa X.bak</div>
<svg class="a" style="left:285px;top:83px;width:13px;height:13px" viewBox="0 0 13 13"><rect x="0" y="0" width="13" height="13" rx="1" fill="#3f8ee8"/><rect x="1" y="1" width="11" height="11" fill="#76b6f8"/><rect x="2.5" y="0.8" width="8" height="4" fill="#a6d2fb"/><rect x="4" y="1.5" width="1" height="2.4" fill="#3a70c8"/><rect x="1" y="5.2" width="11" height="2.6" fill="#4a94ea"/><rect x="2.5" y="6" width="8" height="0.9" fill="#62a6f0"/><rect x="2.6" y="9" width="7.4" height="1.6" fill="#62bca6"/></svg>
<div class="a" style="left:281px;top:78px;width:169px;height:1px;background:#fff;"></div><div class="a" style="left:281px;top:78px;width:1px;height:21px;background:#fff;"></div>
<svg class="a" style="left:436px;top:84px;width:11px;height:11px" viewBox="0 0 11 11"><rect width="11" height="11" rx="1.5" fill="#a8a8a8"/><path d="M2.7 2.7L8.3 8.3M8.3 2.7L2.7 8.3" stroke="#fff" stroke-width="2.1"/></svg>
<div class="a" style="left:452px;top:77px;width:126px;height:4px;background:linear-gradient(#faaa3c 0 3px,#f6c27c 3px 4px);"></div>
<div class="a" style="left:577px;top:76px;width:1px;height:24px;background:#505050;"></div>
<div class="t tabt" style="left:471.00px;color:#000;transform:scaleX(0.9181);">STANDARD.XML</div>
<svg class="a" style="left:456px;top:83px;width:13px;height:13px" viewBox="0 0 13 13"><rect x="0" y="0" width="13" height="13" rx="1" fill="#4a7cc8"/><rect x="1" y="1" width="11" height="11" fill="#8ab8f0"/><rect x="2.5" y="0.8" width="8" height="4" fill="#f4f8ff"/><rect x="4" y="1.5" width="1" height="2.4" fill="#3a70c8"/><rect x="1" y="5.2" width="11" height="2.6" fill="#4a84dc"/><rect x="2.5" y="6" width="8" height="0.9" fill="#6aa0e8"/><rect x="2.6" y="9" width="7.4" height="1.6" fill="#78c466"/></svg>
<svg class="a" style="left:561px;top:84px;width:11px;height:11px" viewBox="0 0 11 11"><rect width="11" height="11" rx="1.5" fill="#b4627e"/><path d="M2.7 2.7L8.3 8.3M8.3 2.7L2.7 8.3" stroke="#fff" stroke-width="2.1"/></svg>
<div class="a" style="left:450px;top:78px;width:2px;height:21px;background:#fff;"></div>
<div class="a" style="left:10px;top:99px;width:1014px;height:1px;background:#fff;"></div><div class="a" style="left:10px;top:100px;width:1014px;height:1px;background:#f6f6f6;"></div>
<div class="a" style="left:97px;top:78px;width:1px;height:21px;background:#505050;"></div>
<div class="a" style="left:279px;top:78px;width:1px;height:21px;background:#505050;"></div>
<div class="a" style="left:8px;top:75px;width:1px;height:949px;background:#fff;"></div>
<div class="a" style="left:10px;top:101px;width:1014px;height:923px;background:#a0a0a0;"></div>
<div class="a" style="left:11px;top:102px;width:1013px;height:922px;background:#696969;"></div>
<div class="a" style="left:12px;top:103px;width:1012px;height:921px;background:#fff;"></div>
<div class="a" style="left:12px;top:103px;width:48px;height:921px;background:#e4e4e4;"></div>
<div class="a" style="left:60px;top:103px;width:14px;height:921px;background:conic-gradient(#fff 25%,#e4e4e4 0 50%,#fff 0 75%,#e4e4e4 0) 0 0/2px 2px;"></div>
<div class="a" style="left:75px;top:643px;width:949px;height:18px;background:#e8e8ff;"></div>
<div class="a" style="left:75px;top:643px;width:128px;height:18px;background:#c0c0c0;"></div>
<div class="a" style="left:75px;top:661px;width:248px;height:18px;background:#c0c0c0;"></div>
<div class="a" style="left:75px;top:679px;width:424px;height:18px;background:#c0c0c0;"></div>
<div class="a" style="left:75px;top:697px;width:128px;height:18px;background:#c0c0c0;"></div>
<div class="a" style="left:75px;top:643px;width:1px;height:18px;background:#8000ff;"></div>
<div class="a" style="left:75px;top:103px;width:16px;height:18px;background:#ffff00;"></div><div class="a" style="left:419px;top:103px;width:16px;height:18px;background:#ffff00;"></div>
<div class="ig" style="left:108px;top:157px;height:54px;"></div>
<div class="ig" style="left:108px;top:265px;height:774px;"></div>
<div class="ig" style="left:140px;top:301px;height:36px;"></div>
<div class="ig" style="left:140px;top:373px;height:36px;"></div>
<div class="ig" style="left:140px;top:445px;height:36px;"></div>
<div class="ig" style="left:140px;top:517px;height:36px;"></div>
<div class="ig" style="left:140px;top:589px;height:36px;"></div>
<div class="ig" style="left:140px;top:661px;height:36px;"></div>
<div class="ig" style="left:140px;top:733px;height:36px;"></div>
<div class="ig" style="left:140px;top:805px;height:36px;"></div>
<div class="ig" style="left:140px;top:877px;height:54px;"></div>
<div class="ig" style="left:140px;top:967px;height:36px;"></div>
<div class="ig" style="left:108px;top:643px;height:72px;background:repeating-linear-gradient(#fff 0 1px,#c0c0c0 1px 2px);"></div>
<div class="ig" style="left:140px;top:661px;height:36px;background:repeating-linear-gradient(#fff 0 1px,#c0c0c0 1px 2px);"></div>
<div class="a" style="left:67px;top:202px;width:1px;height:822px;background:#808080;"></div>
<div class="a" style="left:67px;top:652px;width:1px;height:55px;background:#ff0000;"></div>
<div class="fb" style="top:197px;border-color:#808080;"><i style="background:#808080"></i></div>
<div class="fb" style="top:251px;border-color:#808080;"><i style="background:#808080"></i></div>
<div class="fb" style="top:287px;border-color:#808080;"><i style="background:#808080"></i></div>
<div class="fb" style="top:359px;border-color:#808080;"><i style="background:#808080"></i></div>
<div class="fb" style="top:431px;border-color:#808080;"><i style="background:#808080"></i></div>
<div class="fb" style="top:503px;border-color:#808080;"><i style="background:#808080"></i></div>
<div class="fb" style="top:575px;border-color:#808080;"><i style="background:#808080"></i></div>
<div class="fb" style="top:647px;border-color:#ff0000;"><i style="background:#ff0000"></i></div>
<div class="fb" style="top:719px;border-color:#808080;"><i style="background:#808080"></i></div>
<div class="fb" style="top:791px;border-color:#808080;"><i style="background:#808080"></i></div>
<div class="fb" style="top:863px;border-color:#808080;"><i style="background:#808080"></i></div>
<div class="fb" style="top:953px;border-color:#808080;"><i style="background:#808080"></i></div>
<div class="ft" style="top:346px;background:#808080;"></div>
<div class="ft" style="top:418px;background:#808080;"></div>
<div class="ft" style="top:490px;background:#808080;"></div>
<div class="ft" style="top:562px;background:#808080;"></div>
<div class="ft" style="top:634px;background:#808080;"></div>
<div class="ft" style="top:706px;background:#ff0000;"></div>
<div class="ft" style="top:778px;background:#808080;"></div>
<div class="ft" style="top:850px;background:#808080;"></div>
<div class="ft" style="top:940px;background:#808080;"></div>
<div class="ft" style="top:1012px;background:#808080;"></div>
<div class="ln" style="top:103px;">1</div>
<div class="cl" style="top:103px;"><span class="q">&lt;?</span><span class="g">xml</span> <span class="r">version</span><span class="e">=</span><span class="p">&quot;1.0&quot;</span> <span class="r">encoding</span><span class="e">=</span><span class="p">&quot;Windows-1252&quot;</span><span class="q">?&gt;</span></div>
<div class="ln" style="top:121px;">2</div>
<div class="ln" style="top:139px;">3</div>
<div class="cl" style="top:139px;"><span class="g">&lt;SimBase.Document</span></div>
<div class="ln" style="top:157px;">4</div>
<div class="cl" style="top:157px;">		<span class="r">Type</span><span class="e">=</span><span class="p">&quot;Controls&quot;</span></div>
<div class="ln" style="top:175px;">5</div>
<div class="cl" style="top:175px;">		<span class="r">version</span><span class="e">=</span><span class="p">&quot;1,0&quot;</span></div>
<div class="ln" style="top:193px;">6</div>
<div class="cl" style="top:193px;">		<span class="r">id</span><span class="e">=</span><span class="p">&quot;Standard&quot;</span><span class="g">&gt;</span></div>
<div class="ln" style="top:211px;">7</div>
<div class="cl" style="top:211px;">	<span class="g">&lt;Descr&gt;</span>Controls Mapping File<span class="g">&lt;/Descr&gt;</span></div>
<div class="ln" style="top:229px;">8</div>
<div class="cl" style="top:229px;">	<span class="g">&lt;Filename&gt;</span>Standard.XML<span class="g">&lt;/Filename&gt;</span></div>
<div class="ln" style="top:247px;">9</div>
<div class="cl" style="top:247px;">	<span class="g">&lt;SimControls.Map&gt;</span></div>
<div class="ln" style="top:265px;">10</div>
<div class="cl" style="top:265px;">		<span class="g">&lt;Name&gt;</span>KEYBOARD_MAIN<span class="g">&lt;/Name&gt;</span></div>
<div class="ln" style="top:283px;">11</div>
<div class="cl" style="top:283px;">		<span class="g">&lt;Entry&gt;</span></div>
<div class="ln" style="top:301px;">12</div>
<div class="cl" style="top:301px;">			<span class="g">&lt;Key&gt;</span>K<span class="g">&lt;/Key&gt;</span></div>
<div class="ln" style="top:319px;">13</div>
<div class="cl" style="top:319px;">			<span class="g">&lt;Down&gt;</span>KNEEBOARD_VIEW<span class="g">&lt;/Down&gt;</span></div>
<div class="ln" style="top:337px;">14</div>
<div class="cl" style="top:337px;">		<span class="g">&lt;/Entry&gt;</span></div>
<div class="ln" style="top:355px;">15</div>
<div class="cl" style="top:355px;">		<span class="g">&lt;Entry&gt;</span></div>
<div class="ln" style="top:373px;">16</div>
<div class="cl" style="top:373px;">			<span class="g">&lt;Key&gt;</span>G<span class="g">&lt;/Key&gt;</span></div>
<div class="ln" style="top:391px;">17</div>
<div class="cl" style="top:391px;">			<span class="g">&lt;Down&gt;</span>GEAR_TOGGLE<span class="g">&lt;/Down&gt;</span></div>
<div class="ln" style="top:409px;">18</div>
<div class="cl" style="top:409px;">		<span class="g">&lt;/Entry&gt;</span></div>
<div class="ln" style="top:427px;">19</div>
<div class="cl" style="top:427px;">		<span class="g">&lt;Entry&gt;</span></div>
<div class="ln" style="top:445px;">20</div>
<div class="cl" style="top:445px;">			<span class="g">&lt;Key&gt;</span>VK_LBRACKET<span class="g">&lt;/Key&gt;</span></div>
<div class="ln" style="top:463px;">21</div>
<div class="cl" style="top:463px;">			<span class="g">&lt;Down&gt;</span>NEW_VIEW<span class="g">&lt;/Down&gt;</span></div>
<div class="ln" style="top:481px;">22</div>
<div class="cl" style="top:481px;">		<span class="g">&lt;/Entry&gt;</span></div>
<div class="ln" style="top:499px;">23</div>
<div class="cl" style="top:499px;">		<span class="g">&lt;Entry&gt;</span></div>
<div class="ln" style="top:517px;">24</div>
<div class="cl" style="top:517px;">			<span class="g">&lt;Key&gt;</span>SHIFT+T<span class="g">&lt;/Key&gt;</span></div>
<div class="ln" style="top:535px;">25</div>
<div class="cl" style="top:535px;">			<span class="g">&lt;Down&gt;</span>MP_TRANSFER_CONTROL<span class="g">&lt;/Down&gt;</span></div>
<div class="ln" style="top:553px;">26</div>
<div class="cl" style="top:553px;">		<span class="g">&lt;/Entry&gt;</span></div>
<div class="ln" style="top:571px;">27</div>
<div class="cl" style="top:571px;">		<span class="g">&lt;Entry&gt;</span></div>
<div class="ln" style="top:589px;">28</div>
<div class="cl" style="top:589px;">			<span class="g">&lt;Key&gt;</span>SHIFT+F<span class="g">&lt;/Key&gt;</span></div>
<div class="ln" style="top:607px;">29</div>
<div class="cl" style="top:607px;">			<span class="g">&lt;Down&gt;</span>REQUEST_FUEL_KEY<span class="g">&lt;/Down&gt;</span></div>
<div class="ln" style="top:625px;">30</div>
<div class="cl" style="top:625px;">		<span class="g">&lt;/Entry&gt;</span></div>
<div class="ln" style="top:643px;">31</div>
<div class="cl" style="top:643px;">		<span class="g">&lt;Entry&gt;</span></div>
<div class="ln" style="top:661px;">32</div>
<div class="cl" style="top:661px;">			<span class="g">&lt;Key&gt;</span>SHIFT+U<span class="g">&lt;/Key&gt;</span></div>
<div class="ln" style="top:679px;">33</div>
<div class="cl" style="top:679px;">			<span class="g">&lt;Down&gt;</span>TOGGLE_AIRPORT_NAME_DISPLAY<span class="g">&lt;/Down&gt;</span></div>
<div class="ln" style="top:697px;">34</div>
<div class="cl" style="top:697px;">		<span class="g">&lt;/Entry&gt;</span></div>
<div class="ln" style="top:715px;">35</div>
<div class="cl" style="top:715px;">		<span class="g">&lt;Entry&gt;</span></div>
<div class="ln" style="top:733px;">36</div>
<div class="cl" style="top:733px;">			<span class="g">&lt;Key&gt;</span>CTRL+F3<span class="g">&lt;/Key&gt;</span></div>
<div class="ln" style="top:751px;">37</div>
<div class="cl" style="top:751px;">			<span class="g">&lt;Down&gt;</span>PROP_PITCH_INCR_SMALL<span class="g">&lt;/Down&gt;</span></div>
<div class="ln" style="top:769px;">38</div>
<div class="cl" style="top:769px;">		<span class="g">&lt;/Entry&gt;</span></div>
<div class="ln" style="top:787px;">39</div>
<div class="cl" style="top:787px;">		<span class="g">&lt;Entry&gt;</span></div>
<div class="ln" style="top:805px;">40</div>
<div class="cl" style="top:805px;">			<span class="g">&lt;Key&gt;</span>CTRL+G<span class="g">&lt;/Key&gt;</span></div>
<div class="ln" style="top:823px;">41</div>
<div class="cl" style="top:823px;">			<span class="g">&lt;Down&gt;</span>GEAR_PUMP<span class="g">&lt;/Down&gt;</span></div>
<div class="ln" style="top:841px;">42</div>
<div class="cl" style="top:841px;">		<span class="g">&lt;/Entry&gt;</span></div>
<div class="ln" style="top:859px;">43</div>
<div class="cl" style="top:859px;">		<span class="g">&lt;Entry&gt;</span></div>
<div class="ln" style="top:877px;">44</div>
<div class="cl" style="top:877px;">			<span class="g">&lt;Key&gt;</span>SHIFT+Num_6+Num_5<span class="g">&lt;/Key&gt;</span></div>
<div class="ln" style="top:895px;">45</div>
<div class="cl" style="top:895px;">			<span class="g">&lt;Down&gt;</span>VIEW_RIGHT_UP<span class="g">&lt;/Down&gt;</span></div>
<div class="ln" style="top:913px;">46</div>
<div class="cl" style="top:913px;">			<span class="g">&lt;Up&gt;</span>VIEW_RIGHT_UP<span class="g">&lt;/Up&gt;</span></div>
<div class="ln" style="top:931px;">47</div>
<div class="cl" style="top:931px;">		<span class="g">&lt;/Entry&gt;</span></div>
<div class="ln" style="top:949px;">48</div>
<div class="cl" style="top:949px;">		<span class="g">&lt;Entry&gt;</span></div>
<div class="ln" style="top:967px;">49</div>
<div class="cl" style="top:967px;">			<span class="g">&lt;Key&gt;</span>VK_QUOTE<span class="g">&lt;/Key&gt;</span></div>
<div class="ln" style="top:985px;">50</div>
<div class="cl" style="top:985px;">			<span class="g">&lt;Down&gt;</span>VIEW_WINDOW_TO_FRONT<span class="g">&lt;/Down&gt;</span></div>
<div class="ln" style="top:1003px;">51</div>
<div class="cl" style="top:1003px;">		<span class="g">&lt;/Entry&gt;</span></div>
</body></html>
